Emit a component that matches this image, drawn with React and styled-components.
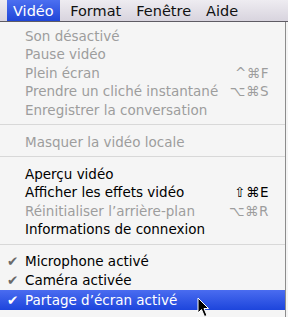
import React from "react";
import styled, { createGlobalStyle } from "styled-components";

const GlobalStyle = createGlobalStyle`
  html, body {
    margin: 0;
    padding: 0;
    background: #f4f4f4;
  }
  body {
    font-family: "DejaVu Sans", "Liberation Sans", sans-serif;
  }
`;

const sections = [
  [
    { label: "Son désactivé", disabled: true },
    { label: "Pause vidéo", disabled: true },
    { label: "Plein écran", shortcut: "^⌘F", disabled: true },
    { label: "Prendre un cliché instantané", shortcut: "⌥⌘S", disabled: true },
    { label: "Enregistrer la conversation", disabled: true },
  ],
  [{ label: "Masquer la vidéo locale", disabled: true }],
  [
    { label: "Aperçu vidéo" },
    { label: "Afficher les effets vidéo", shortcut: "⇧⌘E" },
    { label: "Réinitialiser l’arrière-plan", shortcut: "⌥⌘R", disabled: true },
    { label: "Informations de connexion" },
  ],
  [
    { label: "Microphone activé", checked: true },
    { label: "Caméra activée", checked: true },
    { label: "Partage d’écran activé", checked: true, selected: true },
  ],
];

const titles = ["Vidéo", "Format", "Fenêtre", "Aide"];

export default function App() {
  return (
    <>
      <GlobalStyle />
      <Screen>
        <MenuBar>
          {titles.map((t, i) => (
            <Title key={t} active={i === 0}>
              {t}
            </Title>
          ))}
        </MenuBar>

        <Menu>
          {sections.map((items, s) => (
            <React.Fragment key={s}>
              {s > 0 && <Separator />}
              {items.map((item) => (
                <Row
                  key={item.label}
                  disabled={item.disabled}
                  selected={item.selected}
                >
                  <Check selected={item.selected}>{item.checked ? "✔" : ""}</Check>
                  <Label>{item.label}</Label>
                  {item.shortcut && <Shortcut>{item.shortcut}</Shortcut>}
                  {item.selected && (
                    <Cursor viewBox="0 0 13 21" width="13" height="21">
                      <path
                        d="M1 1 L1 16 L4.5 12.5 L7.5 19.5 L10 18.5 L7 11.5 L11.5 11.5 Z"
                        fill="#000"
                        stroke="#fff"
                        strokeWidth="1"
                        strokeLinejoin="round"
                      />
                    </Cursor>
                  )}
                </Row>
              ))}
            </React.Fragment>
          ))}
        </Menu>
      </Screen>
    </>
  );
}

const Screen = styled.div`
  width: 288px;
  height: 317px;
  overflow: hidden;
  display: flex;
  flex-direction: column;
  background: #f4f4f4;
`;

const MenuBar = styled.div`
  height: 21px;
  flex-shrink: 0;
  display: flex;
  align-items: stretch;
  padding-left: 7px;
  background: linear-gradient(#eeecf1, #d8d4de);
  border-bottom: 1px solid #5f5c64;
`;

const Title = styled.div`
  display: flex;
  align-items: center;
  padding: 0 ${(p) => (p.active ? "6px" : "7.5px")};
  margin-right: ${(p) => (p.active ? "3px" : "0")};
  font-size: 14.5px;
  color: ${(p) => (p.active ? "#ffffff" : "#111111")};
  background: ${(p) =>
    p.active ? "linear-gradient(#4c6ff0, #1f46d8)" : "transparent"};
`;

const Menu = styled.div`
  flex: 1;
  display: flex;
  flex-direction: column;
  padding-top: 4.5px;
  margin-right: 2px;
  background: #f5f5f5;
  border-right: 1px solid #8c8c8c;
`;

const Row = styled.div`
  position: relative;
  height: ${(p) => (p.selected ? "20px" : "18.5px")};
  margin-top: ${(p) => (p.selected ? "0.5px" : "0")};
  display: flex;
  align-items: center;
  padding: 0 16px 0 7px;
  font-size: 13.5px;
  color: ${(p) => (p.selected ? "#ffffff" : p.disabled ? "#9d9d9d" : "#000000")};
  background: ${(p) =>
    p.selected ? "linear-gradient(#4a6cf0, #1d45dc)" : "transparent"};
`;

const Check = styled.span`
  width: 18px;
  flex-shrink: 0;
  font-size: 13.5px;
  color: ${(p) => (p.selected ? "#ffffff" : "#6a6a6a")};
`;

const Label = styled.span`
  flex: 1;
  white-space: nowrap;
`;

const Shortcut = styled.span`
  white-space: nowrap;
  letter-spacing: 0.5px;
`;

const Separator = styled.div`
  height: 1px;
  margin: 5px 0 7.5px;
  background: #d8d8d8;
`;

const Cursor = styled.svg`
  position: absolute;
  left: 197px;
  top: 7px;
`;
